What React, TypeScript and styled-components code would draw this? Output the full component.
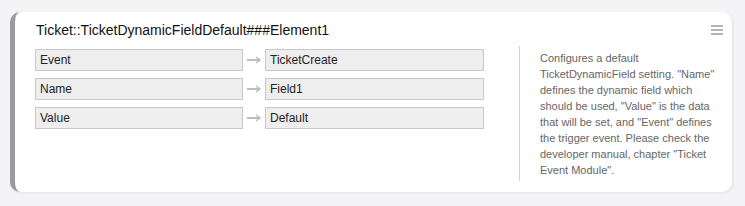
import React from "react";
import styled, { createGlobalStyle } from "styled-components";

const GlobalStyle = createGlobalStyle`
  html, body {
    margin: 0;
    padding: 0;
    background: #f4f4f6;
    font-family: "Liberation Sans", Arial, sans-serif;
  }
`;

const Page = styled.div`
  padding: 12px 13px 14px 10px;
`;

const Card = styled.div`
  background: #ffffff;
  border-left: 5px solid #9b9b9b;
  border-radius: 10px;
  box-shadow: 1px 1px 3px rgba(0, 0, 0, 0.08);
  height: 180px;
  box-sizing: border-box;
`;

const Header = styled.div`
  display: flex;
  align-items: center;
  justify-content: space-between;
  padding: 4px 9px 0 21px;
  height: 27px;
`;

const Title = styled.h2`
  margin: 0;
  font-size: 14px;
  font-weight: normal;
  color: #111;
`;

const MenuIcon = styled.div`
  display: flex;
  flex-direction: column;
  gap: 2px;
  width: 12px;
  span {
    display: block;
    height: 2px;
    background: #b3b3b3;
  }
`;

const Body = styled.div`
  display: flex;
  padding: 3px 0 0 20px;
`;

const Fields = styled.div`
  display: flex;
  flex-direction: column;
  gap: 7px;
  padding-top: 3px;
  width: 449px;
`;

const Row = styled.div`
  display: flex;
  align-items: center;
`;

const Field = styled.div<{ width: number }>`
  width: ${(p) => p.width}px;
  height: 22px;
  box-sizing: border-box;
  background: #eeeeee;
  border: 1px solid #c8c8c8;
  padding: 0 4px;
  font-size: 12px;
  line-height: 20px;
  color: #222;
`;

const Arrow = styled.svg`
  width: 22px;
  height: 10px;
  display: block;
`;

const Help = styled.div`
  margin-left: 35px;
  border-left: 1px solid #d0d0d0;
  padding: 4px 0 0 20px;
  height: 131px;
  width: 180px;
  font-size: 11px;
  line-height: 16px;
  color: #666;
`;

const rows = [
  ["Event", "TicketCreate"],
  ["Name", "Field1"],
  ["Value", "Default"],
];

export default function App() {
  return (
    <Page>
      <GlobalStyle />
      <Card>
        <Header>
          <Title>Ticket::TicketDynamicFieldDefault###Element1</Title>
          <MenuIcon>
            <span />
            <span />
            <span />
          </MenuIcon>
        </Header>
        <Body>
          <Fields>
            {rows.map(([k, v]) => (
              <Row key={k}>
                <Field width={208}>{k}</Field>
                <Arrow viewBox="0 0 22 10">
                  <line x1="4" y1="5" x2="16" y2="5" stroke="#bdbdbd" strokeWidth="2" />
                  <path d="M13 2 L17 5 L13 8" fill="none" stroke="#bdbdbd" strokeWidth="1.5" />
                </Arrow>
                <Field width={219}>{v}</Field>
              </Row>
            ))}
          </Fields>
          <Help>
            Configures a default TicketDynamicField setting. "Name" defines the
            dynamic field which should be used, "Value" is the data that will be
            set, and "Event" defines the trigger event. Please check the developer
            manual, chapter "Ticket Event Module".
          </Help>
        </Body>
      </Card>
    </Page>
  );
}
